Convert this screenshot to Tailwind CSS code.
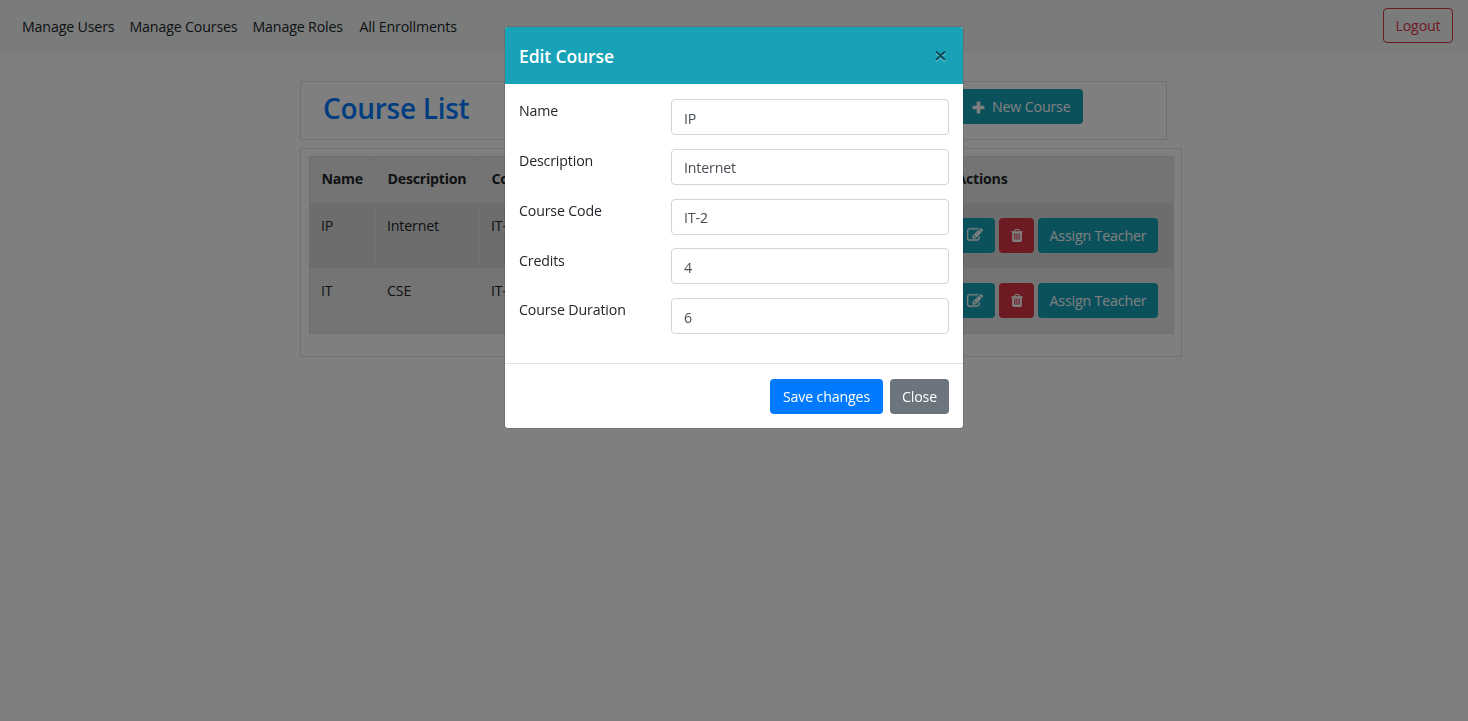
<!DOCTYPE html>
<html lang="en">
<head>
<meta charset="utf-8">
<title>Course List</title>
<script src="https://cdn.jsdelivr.net/npm/@tailwindcss/browser@4"></script>
</head>
<body class="h-[721px] overflow-hidden bg-white font-['Open_Sans','Noto_Sans',sans-serif] text-[14.2px] leading-[22px] tracking-[-0.15px] text-[#212529]">
<svg class="hidden">
  <symbol id="edit" viewBox="0 0 1792 1792"><path fill="currentColor" stroke="currentColor" stroke-width="40" d="M888 1184l116-116-152-152-116 116v56h96v96h56zm440-720q-16-16-33 1l-350 350q-17 17-1 33t33-1l350-350q17-17 1-33zm80 594v190q0 119-84.500 203.500t-203.500 84.500h-832q-119 0-203.500-84.500t-84.500-203.500v-832q0-119 84.500-203.500t203.500-84.500h832q63 0 117 25 15 7 18 23 3 17-9 29l-49 49q-14 14-32 8-23-6-45-6h-832q-66 0-113 47t-47 113v832q0 66 47 113t113 47h832q66 0 113-47t47-113v-126q0-13 9-22l64-64q15-15 35-7t20 29zm-96-738l288 288-672 672h-288v-288zm444 132l-92 92-288-288 92-92q28-28 68-28t68 28l152 152q28 28 28 68t-28 68z"/></symbol>
  <symbol id="trash" viewBox="0 0 1408 1536"><path fill="currentColor" d="M512 1248V544q0-14-9-23t-23-9h-64q-14 0-23 9t-9 23v704q0 14 9 23t23 9h64q14 0 23-9t9-23zm256 0V544q0-14-9-23t-23-9h-64q-14 0-23 9t-9 23v704q0 14 9 23t23 9h64q14 0 23-9t9-23zm256 0V544q0-14-9-23t-23-9h-64q-14 0-23 9t-9 23v704q0 14 9 23t23 9h64q14 0 23-9t9-23zM480 256h448l-48-117q-7-9-17-11H546q-10 2-17 11zm928 32v64q0 14-9 23t-23 9h-96v948q0 83-47 143.500t-113 60.500H288q-66 0-113-58.500T128 1336V384H32q-14 0-23-9t-9-23v-64q0-14 9-23t23-9h309l70-167q15-37 54-63t79-26h320q40 0 79 26t54 63l70 167h309q14 0 23 9t9 23z"/></symbol>
</svg>

<nav class="flex h-[52px] items-center justify-between bg-[#f4f8f7] pr-[15px] pl-[22px]">
  <div class="flex whitespace-nowrap pt-px">
    <span class="w-[107.500px]">Manage Users</span><span class="w-[123px]">Manage Courses</span><span class="w-[107px]">Manage Roles</span><span>All Enrollments</span>
  </div>
  <button class="mb-[1px] h-[35px] w-[70px] rounded-[4px] border border-[#dc3545] pt-px text-[#dc3545]">Logout</button>
</nav>

<main class="pt-[29px] pl-[300px]">
  <section class="flex h-[59px] w-[867px] items-start justify-between border border-[#dee2e6] pr-[83px] pl-[22px]">
    <h1 class="pt-[8px] text-[28px] leading-[37px] font-semibold tracking-[-0.28px] text-[#007bff]">Course List</h1>
    <button class="mt-[7px] flex h-[35px] w-[123px] items-center rounded-[4px] bg-[#17a2b8] pt-px pl-[12px] whitespace-nowrap text-white">
      <svg class="mr-[7px] size-[13px]" viewBox="0 0 13 13"><path fill="currentColor" d="M5.500.5h2q.8 0 .8.8v3.400h3.400q.8 0 .8.800v2q0 .8-.8.800H8.300v3.400q0 .8-.8.800h-2q-.8 0-.8-.8V8.300H1.300q-.8 0-.8-.8v-2q0-.8.800-.8h3.400V1.300q0-.8.800-.8z"/></svg>New Course
    </button>
  </section>

  <section class="mt-[8px] h-[209px] w-[882px] border border-[#dee2e6] px-[8px] pt-[7px]">
    <table class="w-[865px] table-fixed border-collapse border border-[#dadcdf] bg-[#e9e9e9] text-left">
      <colgroup><col class="w-[66px]"><col class="w-[104px]"><col class="w-[160px]"><col class="w-[110px]"><col class="w-[195px]"><col></colgroup>
      <thead>
        <tr class="h-[46px] font-bold tracking-[-0.25px] whitespace-nowrap [&>th]:border-r [&>th]:border-[#e0e2e4] [&>th]:pb-px [&>th]:pl-[11.500px]">
          <th>Name</th><th>Description</th><th>Course Code</th><th>Credits</th><th>Course Duration</th><th>Actions</th>
        </tr>
      </thead>
      <tbody class="[&_td]:border-r [&_td]:border-[#dee2e6] [&_td]:pt-[12px] [&_td]:pl-[11px] [&_td]:align-top">
        <tr class="h-[65.500px] bg-[#dadada]">
          <td>IP</td><td>Internet</td><td>IT-2</td><td>4</td><td>6</td>
          <td><div class="flex justify-end gap-[4px] pt-[3px] pr-[15px] text-white">
            <button class="flex h-[35px] w-[40px] shrink-0 items-center justify-center rounded-[4px] bg-[#17a2b8]"><svg class="size-[16px]"><use href="#edit"/></svg></button>
            <button class="flex h-[35px] w-[35px] shrink-0 items-center justify-center rounded-[4px] bg-[#dc3545]"><svg class="h-[13px] w-[12px]"><use href="#trash"/></svg></button>
            <button class="h-[35px] w-[120px] shrink-0 rounded-[4px] bg-[#17a2b8] pt-px whitespace-nowrap">Assign Teacher</button>
          </div></td>
        </tr>
        <tr class="h-[65.500px]">
          <td>IT</td><td>CSE</td><td>IT-1</td><td>4</td><td>6</td>
          <td><div class="flex justify-end gap-[4px] pt-[3px] pr-[15px] text-white">
            <button class="flex h-[35px] w-[40px] shrink-0 items-center justify-center rounded-[4px] bg-[#17a2b8]"><svg class="size-[16px]"><use href="#edit"/></svg></button>
            <button class="flex h-[35px] w-[35px] shrink-0 items-center justify-center rounded-[4px] bg-[#dc3545]"><svg class="h-[13px] w-[12px]"><use href="#trash"/></svg></button>
            <button class="h-[35px] w-[120px] shrink-0 rounded-[4px] bg-[#17a2b8] pt-px whitespace-nowrap">Assign Teacher</button>
          </div></td>
        </tr>
      </tbody>
    </table>
  </section>
</main>

<div class="fixed inset-0 flex items-start justify-center bg-black/50 pt-[26px]">
  <div class="flex h-[403px] w-[460px] flex-col overflow-hidden rounded-[4px] border border-black/10 bg-white bg-clip-padding">
    <header class="flex h-[57px] shrink-0 items-center justify-between bg-[#17a2b8] pr-[17px] pl-[14px] text-white">
      <h2 class="text-[17.500px] font-semibold tracking-[-0.1px]">Edit Course</h2>
      <svg class="h-[13px] w-[11px]" viewBox="0 0 11 13" fill="none" stroke-width="2.200"><path stroke="#8bd0db" d="M1 3.500l9 8.500M10 3.500l-9 8.500"/><path stroke="#0c4f5a" d="M1 2.500l9 8.500M10 2.500l-9 8.500"/></svg>
    </header>
    <form class="flex h-[280px] shrink-0 flex-col gap-[14.800px] border-b border-[#dee2e6] pt-[15px] pr-[14px] pl-[14px]">
      <label class="flex h-[35px] justify-between"><span class="pt-[1.300px]">Name</span><input class="h-[36px] w-[278px] rounded-[4px] border border-[#ced4da] px-[12px] pt-[2px] text-[#495057]" value="IP"></label>
      <label class="flex h-[35px] justify-between"><span class="pt-[1.300px]">Description</span><input class="h-[36px] w-[278px] rounded-[4px] border border-[#ced4da] px-[12px] pt-[2px] text-[#495057]" value="Internet"></label>
      <label class="flex h-[35px] justify-between"><span class="pt-[1.300px]">Course Code</span><input class="h-[36px] w-[278px] rounded-[4px] border border-[#ced4da] px-[12px] pt-[2px] text-[#495057]" value="IT-2"></label>
      <label class="flex h-[35px] justify-between"><span class="pt-[1.300px]">Credits</span><input class="h-[36px] w-[278px] rounded-[4px] border border-[#ced4da] px-[12px] pt-[2px] text-[#495057]" value="4"></label>
      <label class="flex h-[35px] justify-between"><span class="pt-[1.300px]">Course Duration</span><input class="h-[36px] w-[278px] rounded-[4px] border border-[#ced4da] px-[12px] pt-[2px] text-[#495057]" value="6"></label>
    </form>
    <footer class="flex justify-end gap-[7px] pt-[15px] pr-[14px] text-white">
      <button class="h-[35px] w-[113px] rounded-[4px] bg-[#007bff]">Save changes</button>
      <button class="h-[35px] w-[59px] rounded-[4px] bg-[#6c757d]">Close</button>
    </footer>
  </div>
</div>
</body>
</html>
